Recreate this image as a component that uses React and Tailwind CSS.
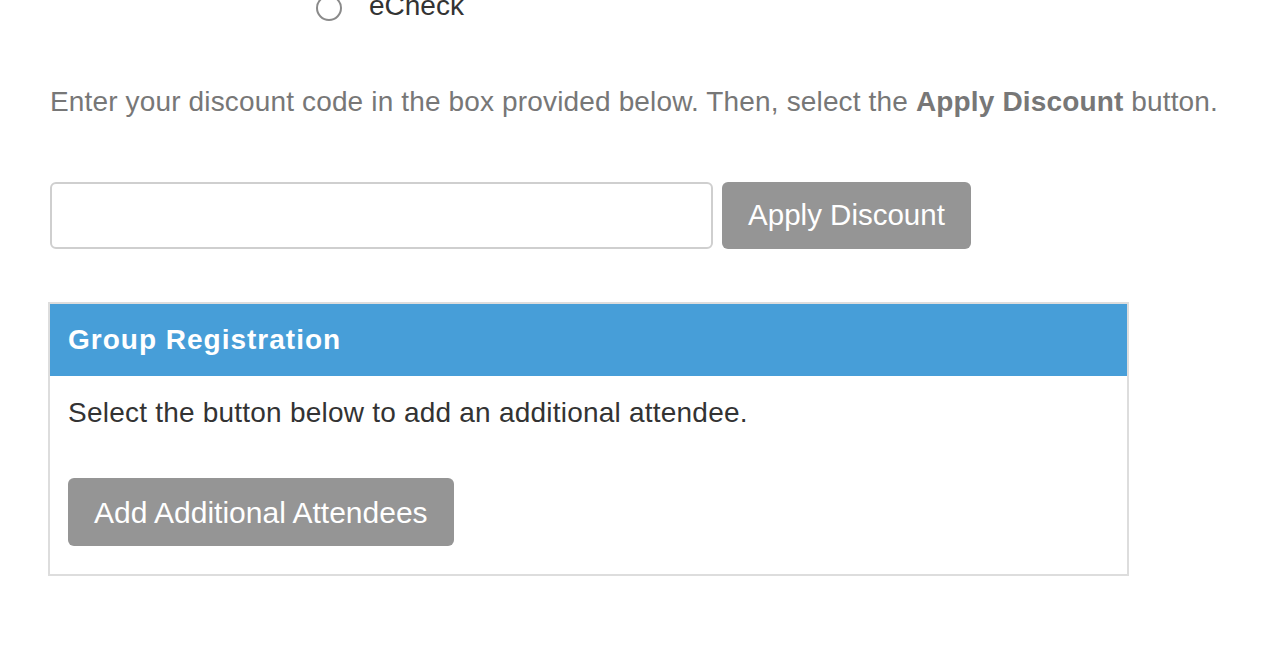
import React, { useState } from "react";

export default function App() {
  const [code, setCode] = useState("");

  return (
    <div className="min-h-[658px] bg-white font-['Liberation_Sans',Arial,sans-serif] overflow-hidden">
      <div className="flex items-center gap-[27px] pl-[316px] -mt-[6px] h-[28px]">
        <span className="w-[26px] h-[26px] rounded-full border-2 border-[#8a8a8a] bg-white" />
        <span className="text-[28px] leading-[28px] text-[#333] -mt-[4px]">eCheck</span>
      </div>

      <p className="mt-[62px] pl-[50px] text-[28px] leading-[36px] tracking-[0.15px] text-[#777]">
        Enter your discount code in the box provided below. Then, select the{" "}
        <b className="font-bold">Apply Discount</b> button.
      </p>

      <div className="mt-[62px] pl-[50px] flex gap-[9px]">
        <input
          value={code}
          onChange={(e) => setCode(e.target.value)}
          className="w-[663px] h-[67px] rounded-[6px] border-2 border-[#cfcfcf] px-3 text-[28px] outline-none"
        />
        <button className="w-[249px] h-[67px] rounded-[6px] bg-[#959595] text-white text-[29.5px] whitespace-nowrap">
          Apply Discount
        </button>
      </div>

      <div className="mt-[53px] ml-[48px] w-[1081px] border-2 border-[#dddddd]">
        <div className="bg-[#479ed8] h-[72px] flex items-center px-[18px]">
          <h2 className="text-white text-[28px] font-bold tracking-[1px]">Group Registration</h2>
        </div>
        <div className="px-[18px] pt-[20px] pb-[28px]">
          <p className="text-[28px] leading-[34px] tracking-[0.22px] text-[#333]">
            Select the button below to add an additional attendee.
          </p>
          <button className="mt-[48px] h-[68px] px-[26px] rounded-[6px] bg-[#959595] text-white text-[30px] whitespace-nowrap">
            Add Additional Attendees
          </button>
        </div>
      </div>
    </div>
  );
}
